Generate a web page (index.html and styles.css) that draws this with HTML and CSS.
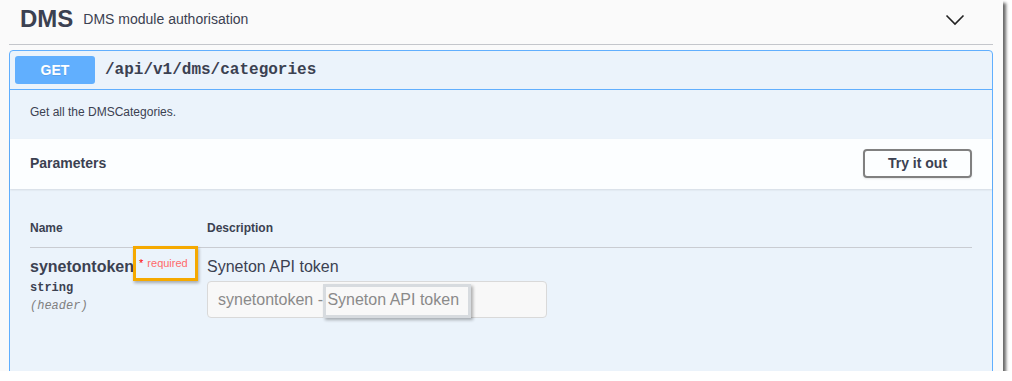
FILE: index.html
```html
<!DOCTYPE html>
<html lang="en">
<head>
  <meta charset="UTF-8">
  <title>DMS - Swagger</title>
  <link rel="stylesheet" href="styles.css">
</head>
<body>
  <div class="shot">
    <div class="tag">
      <span class="tag-name">DMS</span>
      <span class="tag-desc">DMS module authorisation</span>
      <svg class="chevron" width="20" height="20" viewBox="0 0 20 20">
        <polyline points="1.5,5.5 10,14 18.5,5.5" fill="none" stroke="#222" stroke-width="1.6"/>
      </svg>
    </div>

    <div class="opblock">
      <div class="summary">
        <span class="method">GET</span>
        <span class="path">/api/v1/dms/categories</span>
      </div>

      <div class="description">
        <p>Get all the DMSCategories.</p>
      </div>

      <div class="section-header">
        <h4>Parameters</h4>
        <button class="try-out">Try it out</button>
      </div>

      <div class="table-container">
        <table class="parameters">
          <thead>
            <tr>
              <th class="col-name">Name</th>
              <th>Description</th>
            </tr>
          </thead>
          <tbody>
            <tr>
              <td class="col-name">
                <div class="param-name">synetontoken<span class="req"><span class="star">*</span> required</span><span class="mark orange"></span></div>
                <div class="param-type">string</div>
                <div class="param-in">(header)</div>
              </td>
              <td>
                <div class="param-desc">Syneton API token</div>
                <div class="input-wrap">
                  <input type="text" placeholder="synetontoken - Syneton API token">
                  <span class="mark grey"></span>
                </div>
              </td>
            </tr>
          </tbody>
        </table>
      </div>
    </div>
  </div>
</body>
</html>
```

FILE: styles.css
```css
* {
  margin: 0;
  padding: 0;
  box-sizing: border-box;
}

body {
  background: #fff;
  font-family: 'Liberation Sans', Arial, sans-serif;
  color: #3b4151;
}

.shot {
  width: 1003px;
  height: 371px;
  background: #fafafa;
  overflow: hidden;
  padding: 0 10px 0 9px;
  box-shadow: 3px 3px 3px rgba(0, 0, 0, 0.6);
}

.tag {
  display: flex;
  align-items: center;
  height: 45px;
  padding: 0 0 6px 11px;
  border-bottom: 1px solid #c4c6cb;
}

.tag-name {
  font-size: 24px;
  font-weight: 700;
}

.tag-desc {
  font-size: 14px;
  margin-left: 10px;
  flex: 1;
}

.chevron {
  margin-right: 28px;
  margin-top: 1px;
}

.opblock {
  margin-top: 5px;
  border: 1px solid #61affe;
  border-radius: 4px;
  background: #ebf3fb;
  height: 400px;
}

.summary {
  display: flex;
  align-items: center;
  padding: 5px;
  border-bottom: 1px solid #61affe;
}

.method {
  width: 80px;
  height: 28px;
  line-height: 28px;
  border-radius: 3px;
  background: #61affe;
  color: #fff;
  font-size: 14px;
  font-weight: 700;
  text-align: center;
  text-shadow: 0 1px 0 rgba(0, 0, 0, 0.1);
}

.path {
  margin-left: 10px;
  font-family: 'Liberation Mono', 'Courier New', monospace;
  font-size: 16px;
  font-weight: 600;
}

.description {
  padding: 15px 20px;
  font-size: 12px;
  line-height: 14px;
}

.description p {
  margin-bottom: 5px;
}

.section-header {
  display: flex;
  align-items: center;
  justify-content: space-between;
  min-height: 50px;
  padding: 6px 20px 8px;
  background: rgba(255, 255, 255, 0.85);
  box-shadow: 0 1px 2px rgba(0, 0, 0, 0.1);
}

.section-header h4 {
  font-size: 14px;
  font-weight: 700;
}

.try-out {
  width: 109px;
  height: 29px;
  border: 2px solid #808080;
  border-radius: 4px;
  background: transparent;
  font-family: inherit;
  font-size: 14px;
  font-weight: 700;
  color: #3b4151;
  box-shadow: 0 1px 2px rgba(0, 0, 0, 0.1);
}

.table-container {
  padding: 20px;
}

.parameters {
  width: 100%;
  border-collapse: collapse;
  text-align: left;
}

.parameters th {
  padding: 12px 0;
  font-size: 12px;
  line-height: 14px;
  font-weight: 700;
  border-bottom: 1px solid #c9ccd2;
}

.parameters td {
  padding: 10px 0 0 0;
  vertical-align: top;
}

.col-name {
  width: 177px;
}

.param-name {
  position: relative;
  font-size: 16px;
  font-weight: 700;
  line-height: 18px;
}

.req {
  position: relative;
  top: -5px;
  margin-left: 5px;
  font-size: 11px;
  font-weight: 400;
  color: #ff6a6a;
}

.star {
  color: #f00;
  margin-right: 1px;
}

.mark {
  position: absolute;
  pointer-events: none;
}

.mark.orange {
  left: 103px;
  top: -12px;
  width: 65px;
  height: 35px;
  border: 3px solid #f5a900;
  box-shadow: 1px 2px 3px rgba(0, 0, 0, 0.3);
}

.param-type {
  margin-top: 3px;
  font-family: 'Liberation Mono', 'Courier New', monospace;
  font-size: 12px;
  font-weight: 600;
  line-height: 16px;
}

.param-in {
  margin-top: 2px;
  font-family: 'Liberation Mono', 'Courier New', monospace;
  font-size: 12px;
  font-style: italic;
  line-height: 16px;
  color: #808080;
}

.param-desc {
  font-size: 16px;
  line-height: 18px;
}

.input-wrap {
  position: relative;
  width: 340px;
  margin-top: 5px;
}

.input-wrap input {
  width: 340px;
  height: 37px;
  padding: 0 10px;
  border: 1px solid #d9d9d9;
  border-radius: 4px;
  background: #f8f8f8;
  font-family: 'Liberation Sans', Arial, sans-serif;
  font-size: 16px;
}

.input-wrap input::placeholder {
  color: #8a8a8a;
}

.mark.grey {
  left: 116px;
  top: 3px;
  width: 148px;
  height: 34px;
  border: 3px solid #d7dbdf;
  box-shadow: 2px 2px 3px rgba(0, 0, 0, 0.3);
}
```
